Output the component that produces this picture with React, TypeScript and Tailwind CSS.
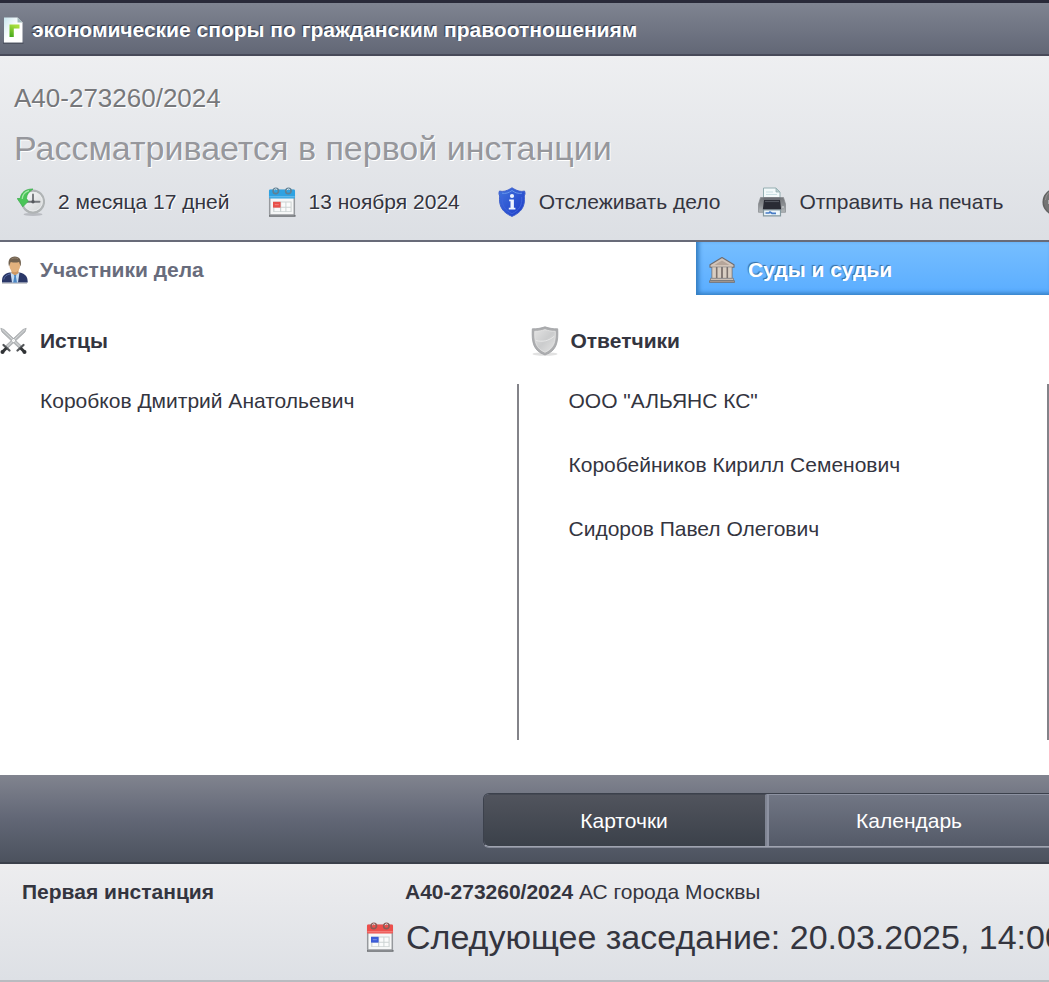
import type { ReactNode } from "react";

type IconProps = { className?: string };

function DocIcon({ className }: IconProps) {
    return (
        <svg className={className} viewBox="0 0 24 28" aria-hidden="true">
            <defs>
                <linearGradient id="docPaper" x1="0" y1="0" x2="1" y2="1">
                    <stop offset="0" stopColor="#c9e6ee" />
                    <stop offset="0.5" stopColor="#ffffff" />
                    <stop offset="1" stopColor="#ffffff" />
                </linearGradient>
                <linearGradient id="docGreen" x1="0" y1="1" x2="0.4" y2="0">
                    <stop offset="0" stopColor="#3fa51c" />
                    <stop offset="1" stopColor="#a8df3c" />
                </linearGradient>
            </defs>
            <path d="M3 27.2h20.5" stroke="#414652" strokeWidth="1.4" opacity="0.7" />
            <path d="M4 1.5h13.5l5 5V26.5H4z" fill="url(#docPaper)" />
            <path d="M17.5 1.5v5h5z" fill="#9fb7ba" />
            <path d="M9.5 21V8.500h10v4h-5.700V21z" fill="url(#docGreen)" />
        </svg>
    );
}

function ClockIcon({ className }: IconProps) {
    return (
        <svg className={className} viewBox="0 0 28 28" aria-hidden="true">
            <defs>
                <linearGradient id="clockFace" x1="0" y1="0" x2="1" y2="1">
                    <stop offset="0" stopColor="#fdfdfd" />
                    <stop offset="1" stopColor="#cfd2d3" />
                </linearGradient>
            </defs>
            <ellipse cx="16" cy="26.4" rx="9.5" ry="1.5" fill="#8b8f94" opacity="0.45" />
            <circle cx="16" cy="13.6" r="11" fill="url(#clockFace)" stroke="#b0b4b5" strokeWidth="2.2" />
            <circle cx="16" cy="13.6" r="9.3" fill="none" stroke="#e9ebec" strokeWidth="1" />
            <path d="M16 6.500v7.300M10.500 13.800h12" stroke="#74777b" strokeWidth="1.900" strokeLinecap="round" fill="none" />
            <circle cx="16" cy="13.800" r="1.700" fill="#56595d" />
            <path d="M16 1C8.400.8 4 4.500 3.200 10.500H.2L5.800 18.800l5.500-5.500-1.800-2.800C9.700 6.500 12 3.500 16 1z" fill="#4ac557" stroke="#38aa49" strokeWidth="0.7" strokeLinejoin="round" />
            <path d="M12 2.700C7.600 4 5.500 6.900 5.200 11" fill="none" stroke="#a4e8a7" strokeWidth="1.200" />
        </svg>
    );
}

function CalendarIcon({ className, top, ring, mark }: IconProps & { top: string; ring: string; mark: string }) {
    return (
        <svg className={className} viewBox="0 0 28 30" aria-hidden="true">
            <path d="M1 28.800h26.500" stroke="#5d6064" strokeWidth="1.800" />
            <rect x="1.700" y="3.500" width="24.600" height="24.600" rx="0.800" fill="#f6f7f7" stroke="#96999d" strokeWidth="1.500" />
            <rect x="1" y="2.500" width="26" height="9" rx="1" fill={top} />
            <path d="M1.300 9.800h25.400" stroke="#ffffff" strokeWidth="1" opacity="0.35" />
            <rect x="5.200" y="14.500" width="18.400" height="10.500" fill="#ccd3d3" />
            <path d="M13.200 15.500h4.200v4.200h-4.200zM18.400 15.500h4.200v4.200h-4.200zM6.400 20.800H12v3.400H6.400zM13.200 20.800h4.200v3.400h-4.200zM18.400 20.800h4.200v3.400h-4.200z" fill="#fafbfb" />
            <rect x="5" y="14.800" width="7.600" height="5.800" fill={mark} />
            <path d="M6.800 17.700h4" stroke="#ffffff" strokeWidth="0.800" opacity="0.4" />
            <g fill={top} stroke={ring} strokeWidth="1.700">
                <circle cx="7.800" cy="4" r="2.700" />
                <circle cx="20.400" cy="4" r="2.700" />
            </g>
            <path d="M6.200 3a2 2 0 0 1 3-.5M18.800 3a2 2 0 0 1 3-.5" fill="none" stroke="#e5eaed" strokeWidth="1" />
        </svg>
    );
}

function InfoShieldIcon({ className }: IconProps) {
    return (
        <svg className={className} viewBox="0 0 28 30" aria-hidden="true">
            <defs>
                <linearGradient id="infoShield" x1="0" y1="0" x2="1" y2="1">
                    <stop offset="0" stopColor="#4274de" />
                    <stop offset="1" stopColor="#1b3ac6" />
                </linearGradient>
            </defs>
            <path d="M1.500 4C6 5.200 9.500 3.500 14 .8c4.500 2.700 8 4.400 12.500 3.200.8 2 .7 3-.2 5 1.200 10.500-3 16.500-12.300 20.400C4.700 25.500.5 19.500 1.700 9 .8 7 .7 6 1.500 4z" fill="url(#infoShield)" stroke="#3f60cd" strokeWidth="1" />
            <path d="M4 6.200c3.600.8 7-.5 10-2.700 3 2.200 6.400 3.500 10 2.700" fill="none" stroke="#6795eb" strokeWidth="1" />
            <path d="M4.300 10c-.8 8.200 2.500 13.300 9.700 16.700 7.200-3.400 10.500-8.500 9.700-16.700" fill="none" stroke="#3f63dc" strokeWidth="1" />
            <circle cx="14" cy="9" r="2.100" fill="#edf3ff" />
            <path d="M11.200 12.500h4.700v8.300h1.500v1.800h-6.600v-1.800h1.700v-6.500h-1.300z" fill="#edf3ff" />
        </svg>
    );
}

function PrinterIcon({ className }: IconProps) {
    return (
        <svg className={className} viewBox="0 0 28 30" aria-hidden="true">
            <defs>
                <linearGradient id="printerBody" x1="0" y1="0" x2="0" y2="1">
                    <stop offset="0" stopColor="#74777b" />
                    <stop offset="0.55" stopColor="#8e9195" />
                    <stop offset="1" stopColor="#b4b9bb" />
                </linearGradient>
            </defs>
            <path d="M5.500 1H18l4 4v9H5.500z" fill="#f2f9fa" stroke="#94aeb1" strokeWidth="1" />
            <path d="M18 1v4h4z" fill="#b9ced0" stroke="#94aeb1" strokeWidth="0.800" />
            <path d="M8 5h7M8 7.500h11" stroke="#c9dee2" strokeWidth="1" />
            <path d="M2.500 10.500H25.500L27.500 17v8.300H.5V17z" fill="url(#printerBody)" stroke="#85888c" strokeWidth="0.700" />
            <path d="M5.500 10.500h16.800v2.500H5.500z" fill="#6a6d74" />
            <path d="M6 13h16l1.200 9.500H4.800z" fill="#292b34" />
            <path d="M7 14.500h14" stroke="#51555e" strokeWidth="1.200" />
            <path d="M5.500 23h17v5.800h-17z" fill="#edf6fb" stroke="#83989f" strokeWidth="1.200" />
            <path d="M7.500 26h3.500l1-1 2 1.300h4" fill="none" stroke="#467bc5" strokeWidth="1.700" />
            <circle cx="25" cy="20" r="0.800" fill="#dfe4e4" />
        </svg>
    );
}

function MinusIcon({ className }: IconProps) {
    return (
        <svg className={className} viewBox="0 0 28 28" aria-hidden="true">
            <circle cx="14" cy="14" r="12.800" fill="#747474" stroke="#626262" strokeWidth="1.500" />
            <path d="M3.500 12a10.500 10.500 0 0 1 21 0" fill="none" stroke="#939393" strokeWidth="1" />
            <path d="M6.500 12h15v4h-15z" fill="#f2f2f2" />
        </svg>
    );
}

function PersonIcon({ className }: IconProps) {
    return (
        <svg className={className} viewBox="0 0 28 28" aria-hidden="true">
            <path d="M2 27.300h25" stroke="#c3c5c9" strokeWidth="1.200" />
            <path d="M2 26.500c-.2-6 1.500-8.500 7.500-10h10c6 1.500 8.200 4 8.200 10z" fill="#2b3868" />
            <path d="M3.800 23.500c.5-3 2.500-4.500 6.200-5.500" fill="none" stroke="#5569a1" strokeWidth="1" />
            <path d="M10.500 16.500h9L18 26.500h-6z" fill="#c5dcf3" />
            <path d="M13.800 18.500h2.600l-.5 2 1.100 6h-3.800l1.100-6z" fill="#4c87c4" />
            <path d="M11.500 12.500h7v4.700l-3.500 2-3.500-2z" fill="#ce9762" />
            <ellipse cx="14.800" cy="9.200" rx="5.400" ry="7" fill="#e3b27e" />
            <path d="M9 10.500C7.500 4 10 .6 14.800.6S22 4 20.600 10.500L19 6c-2.800.8-5.500.6-8.300 0z" fill="#71614f" />
            <path d="M11.500 2.900c2-1.100 4.500-1.200 6.500-.2" fill="none" stroke="#93806b" strokeWidth="1" />
        </svg>
    );
}

function CourtIcon({ className }: IconProps) {
    return (
        <svg className={className} viewBox="0 0 28 28" aria-hidden="true">
            <path d="M14 1.500 26 8.800v2.500H2V8.800z" fill="#d2c4b9" stroke="#6e6c70" strokeWidth="1.100" strokeLinejoin="round" />
            <path d="M14 4.400 21.500 9h-15z" fill="#b5a59a" />
            <path d="M3.500 11.300h21v11h-21z" fill="#7c716d" />
            <path d="M4.300 11.300h3.600v11H4.300zM9.500 11.300h3.600v11H9.500zM14.900 11.300h3.600v11h-3.600zM20.100 11.300h3.600v11h-3.600z" fill="#d8cdc2" />
            <path d="M2.500 22.300h23v2.300h-23z" fill="#cdbfb4" stroke="#7c7571" strokeWidth="0.700" />
            <path d="M1.500 24.700h25v1.800h-25z" fill="#a99b92" stroke="#6c6a6d" strokeWidth="0.700" />
        </svg>
    );
}

function SwordsIcon({ className }: IconProps) {
    return (
        <svg className={className} viewBox="0 0 28 28" aria-hidden="true">
            <path d="M.8 1.300 4 2.500 21.500 19l-2.300 2.200L2 5zM26.200 1.300 23 2.500 5.500 19l2.300 2.200L25 5z" fill="#b6b9bb" stroke="#a2a5a7" strokeWidth="0.700" />
            <path d="m2 2.500 18 17M25 2.500 7 19.500" stroke="#e4e6e7" strokeWidth="0.700" />
            <path d="m3.500 18 6 5.500M23.500 18l-6 5.500" stroke="#54575a" strokeWidth="2.300" strokeLinecap="round" />
            <path d="m6.500 21-4 3.800M20.500 21l4 3.800" stroke="#333638" strokeWidth="3" />
            <circle cx="2.500" cy="25" r="2" fill="#303235" />
            <circle cx="24.500" cy="25" r="2" fill="#303235" />
        </svg>
    );
}

function ShieldIcon({ className }: IconProps) {
    return (
        <svg className={className} viewBox="0 0 28 30" aria-hidden="true">
            <defs>
                <linearGradient id="greyShield" x1="0" y1="0" x2="1" y2="1">
                    <stop offset="0" stopColor="#e2e2e2" />
                    <stop offset="0.5" stopColor="#cbcccd" />
                    <stop offset="1" stopColor="#e4e4e4" />
                </linearGradient>
            </defs>
            <ellipse cx="14" cy="28" rx="12.500" ry="1.800" fill="#888888" opacity="0.25" />
            <path d="M1.300 2.800C6 2.900 10 2.200 14 .8c4 1.400 8 2.100 12.700 2 .7 13-.7 22-12.700 26.200C2 24.800.600 15.800 1.300 2.800z" fill="#acadaf" stroke="#a0a1a4" strokeWidth="0.800" />
            <path d="M3.700 5.300c4 .1 7.100-.6 10.300-1.700 3.200 1.100 6.300 1.800 10.300 1.700.3 10.500-1 17-10.300 21C4.700 22.300 3.400 15.800 3.700 5.300z" fill="url(#greyShield)" stroke="#e6e6e6" strokeWidth="0.800" />
            <path d="M5 14.500c6.500 1.700 12.500.5 18.200-4.200" fill="none" stroke="#f0f0f0" strokeWidth="0.700" />
        </svg>
    );
}

function InfoItem({ icon, children, action }: { icon: ReactNode; children: ReactNode; action?: boolean }) {
    const cls = "flex shrink-0 items-center gap-[13px] whitespace-nowrap";
    if (action) {
        return (
            <button type="button" className={cls + " cursor-pointer"}>
                {icon}
                <span>{children}</span>
            </button>
        );
    }
    return (
        <div className={cls}>
            {icon}
            <span>{children}</span>
        </div>
    );
}

function PartyColumn({ icon, title, names, listClass }: { icon: ReactNode; title: string; names: string[]; listClass: string }) {
    return (
        <section>
            <h3 className="flex h-8 items-center gap-3 font-bold">
                {icon}
                {title}
            </h3>
            <ul className={listClass}>
                {names.map((name) => (
                    <li key={name} className="leading-[34px]">
                        <a href="#party">{name}</a>
                    </li>
                ))}
            </ul>
        </section>
    );
}

export default function App() {
    return (
        <div className="w-full overflow-hidden bg-white font-['Liberation_Sans',Arial,sans-serif] text-[21px] text-[#34353f]">
            <header className="flex h-14 items-center gap-2 border-t-3 border-b-2 border-t-[#292a39] border-b-[#484a59] bg-linear-to-b from-[#7f8491] to-[#626776] pt-0.5">
                <DocIcon className="h-7 w-6 shrink-0" />
                <h1 className="font-bold whitespace-nowrap text-white [text-shadow:-1px_-1px_1px_#343743]">
                    экономические споры по гражданским правоотношениям
                </h1>
            </header>

            <section className="border-b-2 border-[#686b79] bg-linear-to-b from-[#eeeff1] to-[#dcdfe4] pt-6 pb-5 [text-shadow:1px_1px_0_#ffffff]">
                <p className="pl-3.5 text-[26px] leading-9 text-[#77787b]">А40-273260/2024</p>
                <h2 className="pt-2 pl-3.5 text-[34px] leading-12 whitespace-nowrap text-[#96979c]">Рассматривается в первой инстанции</h2>
                <div className="flex h-12 items-center gap-[38px] pt-3 pl-[17px]">
                    <InfoItem icon={<ClockIcon className="size-7" />}>2 месяца 17 дней</InfoItem>
                    <InfoItem icon={<CalendarIcon className="h-[30px] w-7" top="#2ea2e2" ring="#5f8195" mark="#e8504a" />}>
                        13 ноября 2024
                    </InfoItem>
                    <InfoItem action icon={<InfoShieldIcon className="h-[30px] w-7" />}>Отслеживать дело</InfoItem>
                    <InfoItem action icon={<PrinterIcon className="h-[30px] w-7" />}>Отправить на печать</InfoItem>
                    <button type="button" aria-label="Свернуть" className="shrink-0">
                        <MinusIcon className="size-7" />
                    </button>
                </div>
            </section>

            <nav className="grid h-[53px] grid-cols-[696fr_353fr] font-bold">
                <button type="button" className="flex items-center gap-3 pt-0.5 text-left text-[#686c7c]">
                    <PersonIcon className="size-7" />
                    Участники дела
                </button>
                <button type="button" className="flex items-center gap-3 bg-linear-to-b from-[#76beff] to-[#5aadff] pt-0.5 pl-3 text-left text-white shadow-[inset_3px_-2px_4px_#347ec2] [text-shadow:-1px_-1px_1px_#386da0]">
                    <CourtIcon className="size-7" />
                    Суды и судьи
                </button>
            </nav>

            <main className="grid grid-cols-2 gap-3 pt-[30px] pb-[35px]">
                <PartyColumn
                    icon={<SwordsIcon className="size-7" />}
                    title="Истцы"
                    names={["Коробков Дмитрий Анатольевич"]}
                    listClass="mt-[27px] flex h-[356px] flex-col gap-[30px] border-r-2 border-[#838389] pl-10"
                />
                <PartyColumn
                    icon={<ShieldIcon className="h-[30px] w-7" />}
                    title="Ответчики"
                    names={['ООО "АЛЬЯНС КС"', "Коробейников Кирилл Семенович", "Сидоров Павел Олегович"]}
                    listClass="mt-[27px] flex h-[356px] flex-col gap-[30px] border-r-2 border-[#838389] pl-[38px]"
                />
            </main>

            <div className="h-[89px] overflow-hidden border-b-2 border-[#3b404b] bg-linear-to-b from-[#81848f] via-[#626776] to-[#4c525e] pt-[18px] pl-[46%]">
                <div className="flex w-[849px] rounded-md border border-[#3c414c] border-b-[#a0a4b0] text-white shadow-[0_1px_0_#848997]">
                    <button type="button" className="h-[52px] w-[283px] rounded-l-md border-t border-r-2 border-t-[#454953] border-r-[#808593] bg-linear-to-b from-[#51545d] to-[#3b414a]">
                        Карточки
                    </button>
                    <button type="button" className="h-[52px] w-[283px] border-t border-l-2 border-[#8d92a1] bg-linear-to-b from-[#717684] to-[#545a68]">
                        Календарь
                    </button>
                </div>
            </div>

            <section className="h-[118px] border-b-2 border-[#b9bbc0] bg-linear-to-b from-[#ededef] to-[#dde0e5] pt-2.5">
                <div className="flex leading-9">
                    <h3 className="w-[405px] shrink-0 pl-[22px] font-bold">Первая инстанция</h3>
                    <p className="whitespace-nowrap">
                        <a href="#case" className="font-bold">А40-273260/2024</a> АС города Москвы
                    </p>
                </div>
                <div className="flex items-center gap-3 pl-[366px]">
                    <CalendarIcon className="h-[30px] w-7 shrink-0" top="#ed4f4c" ring="#8a5c57" mark="#3c5cd8" />
                    <p className="text-[34px] leading-[54px] whitespace-nowrap">Следующее заседание: 20.03.2025, 14:00</p>
                </div>
            </section>
        </div>
    );
}
